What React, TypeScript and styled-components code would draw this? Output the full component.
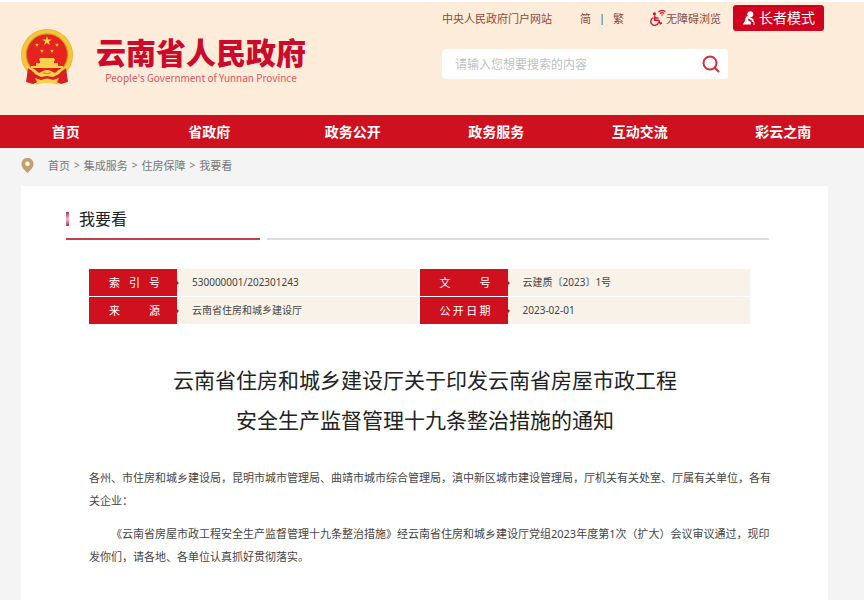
import React from "react";
import styled, { createGlobalStyle } from "styled-components";

const Global = createGlobalStyle`
  * { box-sizing: border-box; }
  body {
    margin: 0;
    background: #f4f4f4;
    color: #333;
    font-family: "Noto Sans", "Noto Sans CJK SC", sans-serif;
    font-size: 11px;
  }
  a { color: inherit; text-decoration: none; }
  button, input { font-family: inherit; }
`;

const Page = styled.div`
  min-height: 100vh;
  display: flex;
  flex-direction: column;
`;

const Header = styled.header`
  display: grid;
  grid-template-columns: 442fr 422fr;
  min-height: 115px;
  background: #fdecda;
  border-top: 2px solid #fff;
`;

const Brand = styled.a`
  display: flex;
  align-items: flex-start;
  gap: 22px;
  padding: 26px 0 0 20px;
`;

const BrandText = styled.div`
  display: flex;
  flex-direction: column;
  align-items: center;
  padding-top: 9px;
`;

const BrandName = styled.h1`
  margin: 0;
  font-family: "Liberation Sans", "Noto Sans CJK SC", sans-serif;
  font-size: 30px;
  line-height: 34px;
  font-weight: 900;
  color: #cb0a2c;
  white-space: nowrap;
`;

const BrandSub = styled.span`
  font-family: "Noto Sans CJK SC", sans-serif;
  font-size: 10px;
  line-height: 14px;
  color: #d6565f;
  white-space: nowrap;
`;

const Tools = styled.div`
  display: flex;
  flex-direction: column;
  gap: 18px;
  padding-top: 3px;
`;

const TopLinks = styled.div`
  display: flex;
  align-items: center;
  height: 26px;
  color: #8a4a3c;
  white-space: nowrap;
`;

const Languages = styled.div`
  display: flex;
  gap: 8px;
  margin: 0 26px 0 28px;
`;

const Divider = styled.span`
  color: #4a5a3c;
`;

const AccessLink = styled.a`
  display: flex;
  align-items: center;
`;

const ElderButton = styled.button`
  display: flex;
  align-items: center;
  justify-content: center;
  gap: 4px;
  width: 91px;
  height: 26px;
  margin-left: 12px;
  padding: 0;
  border: 0;
  border-radius: 3px;
  background: #d0021f;
  color: #fff;
  font-size: 14px;
  line-height: 20px;
`;

const SearchForm = styled.form`
  display: flex;
  align-items: center;
  width: 286px;
  height: 30px;
  padding: 0 7px 0 13px;
  border-radius: 4px;
  background: #fff;
`;

const SearchInput = styled.input`
  flex: 1;
  min-width: 0;
  padding: 0;
  border: 0;
  outline: 0;
  background: transparent;
  font-size: 12px;
  &::placeholder { color: #c0bfc0; opacity: 1; }
`;

const SearchButton = styled.button`
  display: flex;
  padding: 0;
  border: 0;
  background: none;
`;

const Nav = styled.nav`
  background: #cf111f;
  overflow: hidden;
`;

const NavList = styled.ul`
  display: grid;
  grid-template-columns: repeat(6, 1fr);
  margin: 0 9px 0 -6px;
  padding: 0;
  list-style: none;
`;

const NavLink = styled.a`
  display: block;
  text-align: center;
  font-size: 14px;
  line-height: 33px;
  font-weight: 700;
  color: #fff;
`;

const Crumbs = styled.nav`
  display: flex;
  align-items: center;
  gap: 4px;
  height: 38px;
  padding: 0 21px 4px;
  color: #777;
`;

const CrumbPin = styled.span`
  display: flex;
  margin-right: 10px;
`;

const CrumbSep = styled.span`
  font-size: 10px;
`;

const Panel = styled.main`
  flex: 1;
  margin: 0 36px 0 21px;
  padding: 22px 59px 24px 45px;
  background: #fff;
`;

const SectionHead = styled.div`
  display: grid;
  grid-template-columns: 194fr 502fr;
  gap: 7px;
`;

const SectionTitle = styled.h2`
  display: flex;
  align-items: center;
  gap: 10px;
  height: 32px;
  margin: 0;
  padding-bottom: 8px;
  border-bottom: 2px solid #c5404f;
  font-size: 16px;
  line-height: 22px;
  font-weight: 400;
  color: #222;
`;

const SectionMark = styled.span`
  width: 3px;
  height: 14px;
  background: linear-gradient(#b8324a, #f0bcc8 50%, #b8324a);
`;

const SectionRule = styled.div`
  border-bottom: 2px solid #dedede;
`;

const Article = styled.article`
  padding: 29px 0 0 23px;
`;

const MetaTable = styled.table`
  width: calc(100% - 19px);
  table-layout: fixed;
  border-collapse: separate;
  border-spacing: 0;
  font-size: 10px;
  line-height: 27px;
`;

const MetaRow = styled.tr`
  & + & > * { border-top: 1px solid #fff; }
`;

const MetaLabel = styled.th`
  position: relative;
  width: 88px;
  padding: 0 17px 0 20px;
  background: #cf111f;
  background-clip: padding-box;
  color: #fff;
  font-size: 11px;
  font-weight: 400;
  text-align: justify;
  text-align-last: justify;
  &::after {
    content: "";
    position: absolute;
    left: 100%;
    top: 50%;
    margin-top: -2px;
    border-left: 2px solid #cf111f;
    border-top: 2px solid transparent;
    border-bottom: 2px solid transparent;
  }
`;

const MetaValue = styled.td<{ $gap?: boolean }>`
  padding: 0 0 0 15px;
  background: #f9f2e8;
  background-clip: padding-box;
  border-right: ${(p) => (p.$gap ? "2px solid #fff" : "0")};
  color: #444;
`;

const Title = styled.h3`
  margin: 36px 8px 26px 0;
  font-size: 21px;
  line-height: 40px;
  font-weight: 400;
  color: #222;
  text-align: center;
`;

const Paragraph = styled.p<{ $indent?: boolean }>`
  margin: 0 -6px 10px 0;
  line-height: 23px;
  color: #444;
  text-indent: ${(p) => (p.$indent ? "2em" : "0")};
`;

const STAR = "M0-5 1.2-1.6 4.8-1.6 1.9.6 2.9 4 0 1.9-2.9 4-1.9.6-4.8-1.6-1.2-1.6Z";

const Emblem = () => (
  <svg width="54" height="58" viewBox="0 0 54 58" aria-hidden="true">
    <circle cx="27" cy="27" r="26" fill="#eeb62d" />
    <circle cx="27" cy="27" r="23.500" fill="none" stroke="#f4c640" strokeWidth="3" />
    <circle cx="27" cy="26.500" r="20.500" fill="#e5231f" stroke="#c98a1d" />
    <path d="M8 40Q14 37 19 40L27 44 35 40Q40 37 46 40L48 54 41 56 36 54 18 54 13 56 6 54Z" fill="#d81f22" />
    <g fill="#fbd14b">
      <path transform="translate(27 13)" d={STAR} />
      <path transform="translate(17 17) scale(.42)" d={STAR} />
      <path transform="translate(37 17) scale(.42)" d={STAR} />
      <path transform="translate(22 23) scale(.42)" d={STAR} />
      <path transform="translate(32 23) scale(.42)" d={STAR} />
      <path d="M20 30h14l1 2-1 1v2h4v4H16v-4h4v-2l-1-1ZM11 38h32v2H11Z" />
      <path d="M4 38q8 0 15 7l4-2q4-2 8 0l4 2q7-7 15-7-7 3-11 8l-6 3-6-1-6 1-6-3Q11 41 4 38Z" />
      <path d="M15 50l6 2q6-3 12 0l6-2-2 4 2 3-5-1-3-1h-8l-3 1-5 1 2-3Z" />
    </g>
    <path d="M23 44q4 2 8 0l-1 2h-6Z" fill="#e28322" />
  </svg>
);

const Wheelchair = () => (
  <svg width="16" height="16" viewBox="0 0 16 16" fill="none" stroke="#cf1730" strokeLinecap="round" strokeLinejoin="round" aria-hidden="true">
    <circle cx="4.500" cy="3.800" r="1.600" fill="#cf1730" stroke="none" />
    <path d="M4.700 6v4.200h4.200l1.300 3.500 1.200-.5M5 8h3" strokeWidth="1.600" />
    <path d="M2.800 8A3.900 3.900 0 1 0 8.400 12.600" strokeWidth="1.400" />
    <path d="M9 1.500q3-2.200 6 0M10.300 3.300q1.700-1.300 3.400 0" strokeWidth="1.300" />
    <circle cx="12" cy="5" r=".8" fill="#cf1730" stroke="none" />
  </svg>
);

const Elder = () => (
  <svg width="13" height="14" viewBox="0 0 13 14" aria-hidden="true">
    <circle cx="8.300" cy="3.200" r="3" fill="#fff" />
    <path d="M5 5C3 6.500 3.400 9 2.600 10.500L.8 13.500H9V11L5.800 9l.8-1.400 3.800 2.300v1h1V8L9 6.700Z" fill="#fff" />
    <path d="M9.800 10.500q2-1 2.200.6V14" fill="none" stroke="#fff" />
  </svg>
);

const SearchIcon = () => (
  <svg width="20" height="20" viewBox="0 0 20 20" fill="none" stroke="#cb303b" strokeWidth="2" strokeLinecap="round" aria-hidden="true">
    <circle cx="9" cy="9" r="6.500" />
    <path d="m14 14 3.500 3.500" />
  </svg>
);

const Pin = () => (
  <svg width="13" height="15" viewBox="0 0 13 15" aria-hidden="true">
    <path d="M6.500 0C2.700 0 .5 2.700.5 6c0 3.800 4 7 6 9 2-2 6-5.200 6-9 0-3.300-2.200-6-6-6Z" fill="#c59e68" />
    <circle cx="6.500" cy="5.800" r="2.200" fill="#fff" />
  </svg>
);

const NAV = ["首页", "省政府", "政务公开", "政务服务", "互动交流", "彩云之南"];
const CRUMBS = ["首页", "集成服务", "住房保障", "我要看"];

export default function App() {
  return (
    <Page>
      <Global />
      <Header>
        <Brand href="#">
          <Emblem />
          <BrandText>
            <BrandName>云南省人民政府</BrandName>
            <BrandSub>People's Government of Yunnan Province</BrandSub>
          </BrandText>
        </Brand>
        <Tools>
          <TopLinks>
            <a href="#">中央人民政府门户网站</a>
            <Languages>
              <a href="#">简</a>
              <Divider>|</Divider>
              <a href="#">繁</a>
            </Languages>
            <AccessLink href="#">
              <Wheelchair />
              无障碍浏览
            </AccessLink>
            <ElderButton type="button">
              <Elder />
              长者模式
            </ElderButton>
          </TopLinks>
          <SearchForm onSubmit={(e) => e.preventDefault()}>
            <SearchInput type="text" aria-label="搜索" placeholder="请输入您想要搜索的内容" />
            <SearchButton type="submit" aria-label="搜索">
              <SearchIcon />
            </SearchButton>
          </SearchForm>
        </Tools>
      </Header>
      <Nav>
        <NavList>
          {NAV.map((n) => (
            <li key={n}>
              <NavLink href="#">{n}</NavLink>
            </li>
          ))}
        </NavList>
      </Nav>
      <Crumbs>
        <CrumbPin>
          <Pin />
        </CrumbPin>
        {CRUMBS.map((c, i) => (
          <React.Fragment key={c}>
            {i > 0 && <CrumbSep>&gt;</CrumbSep>}
            <a href="#">{c}</a>
          </React.Fragment>
        ))}
      </Crumbs>
      <Panel>
        <SectionHead>
          <SectionTitle>
            <SectionMark />
            我要看
          </SectionTitle>
          <SectionRule />
        </SectionHead>
        <Article>
          <MetaTable>
            <tbody>
              <MetaRow>
                <MetaLabel scope="row">索引号</MetaLabel>
                <MetaValue $gap>530000001/202301243</MetaValue>
                <MetaLabel scope="row">文号</MetaLabel>
                <MetaValue>云建质〔2023〕1号</MetaValue>
              </MetaRow>
              <MetaRow>
                <MetaLabel scope="row">来源</MetaLabel>
                <MetaValue $gap>云南省住房和城乡建设厅</MetaValue>
                <MetaLabel scope="row">公开日期</MetaLabel>
                <MetaValue>2023-02-01</MetaValue>
              </MetaRow>
            </tbody>
          </MetaTable>
          <Title>
            云南省住房和城乡建设厅关于印发云南省房屋市政工程
            <br />
            安全生产监督管理十九条整治措施的通知
          </Title>
          <Paragraph>
            各州、市住房和城乡建设局，昆明市城市管理局、曲靖市城市综合管理局，滇中新区城市建设管理局，厅机关有关处室、厅属有关单位，各有关企业：
          </Paragraph>
          <Paragraph $indent>
            《云南省房屋市政工程安全生产监督管理十九条整治措施》经云南省住房和城乡建设厅党组2023年度第1次（扩大）会议审议通过，现印发你们，请各地、各单位认真抓好贯彻落实。
          </Paragraph>
        </Article>
      </Panel>
    </Page>
  );
}
